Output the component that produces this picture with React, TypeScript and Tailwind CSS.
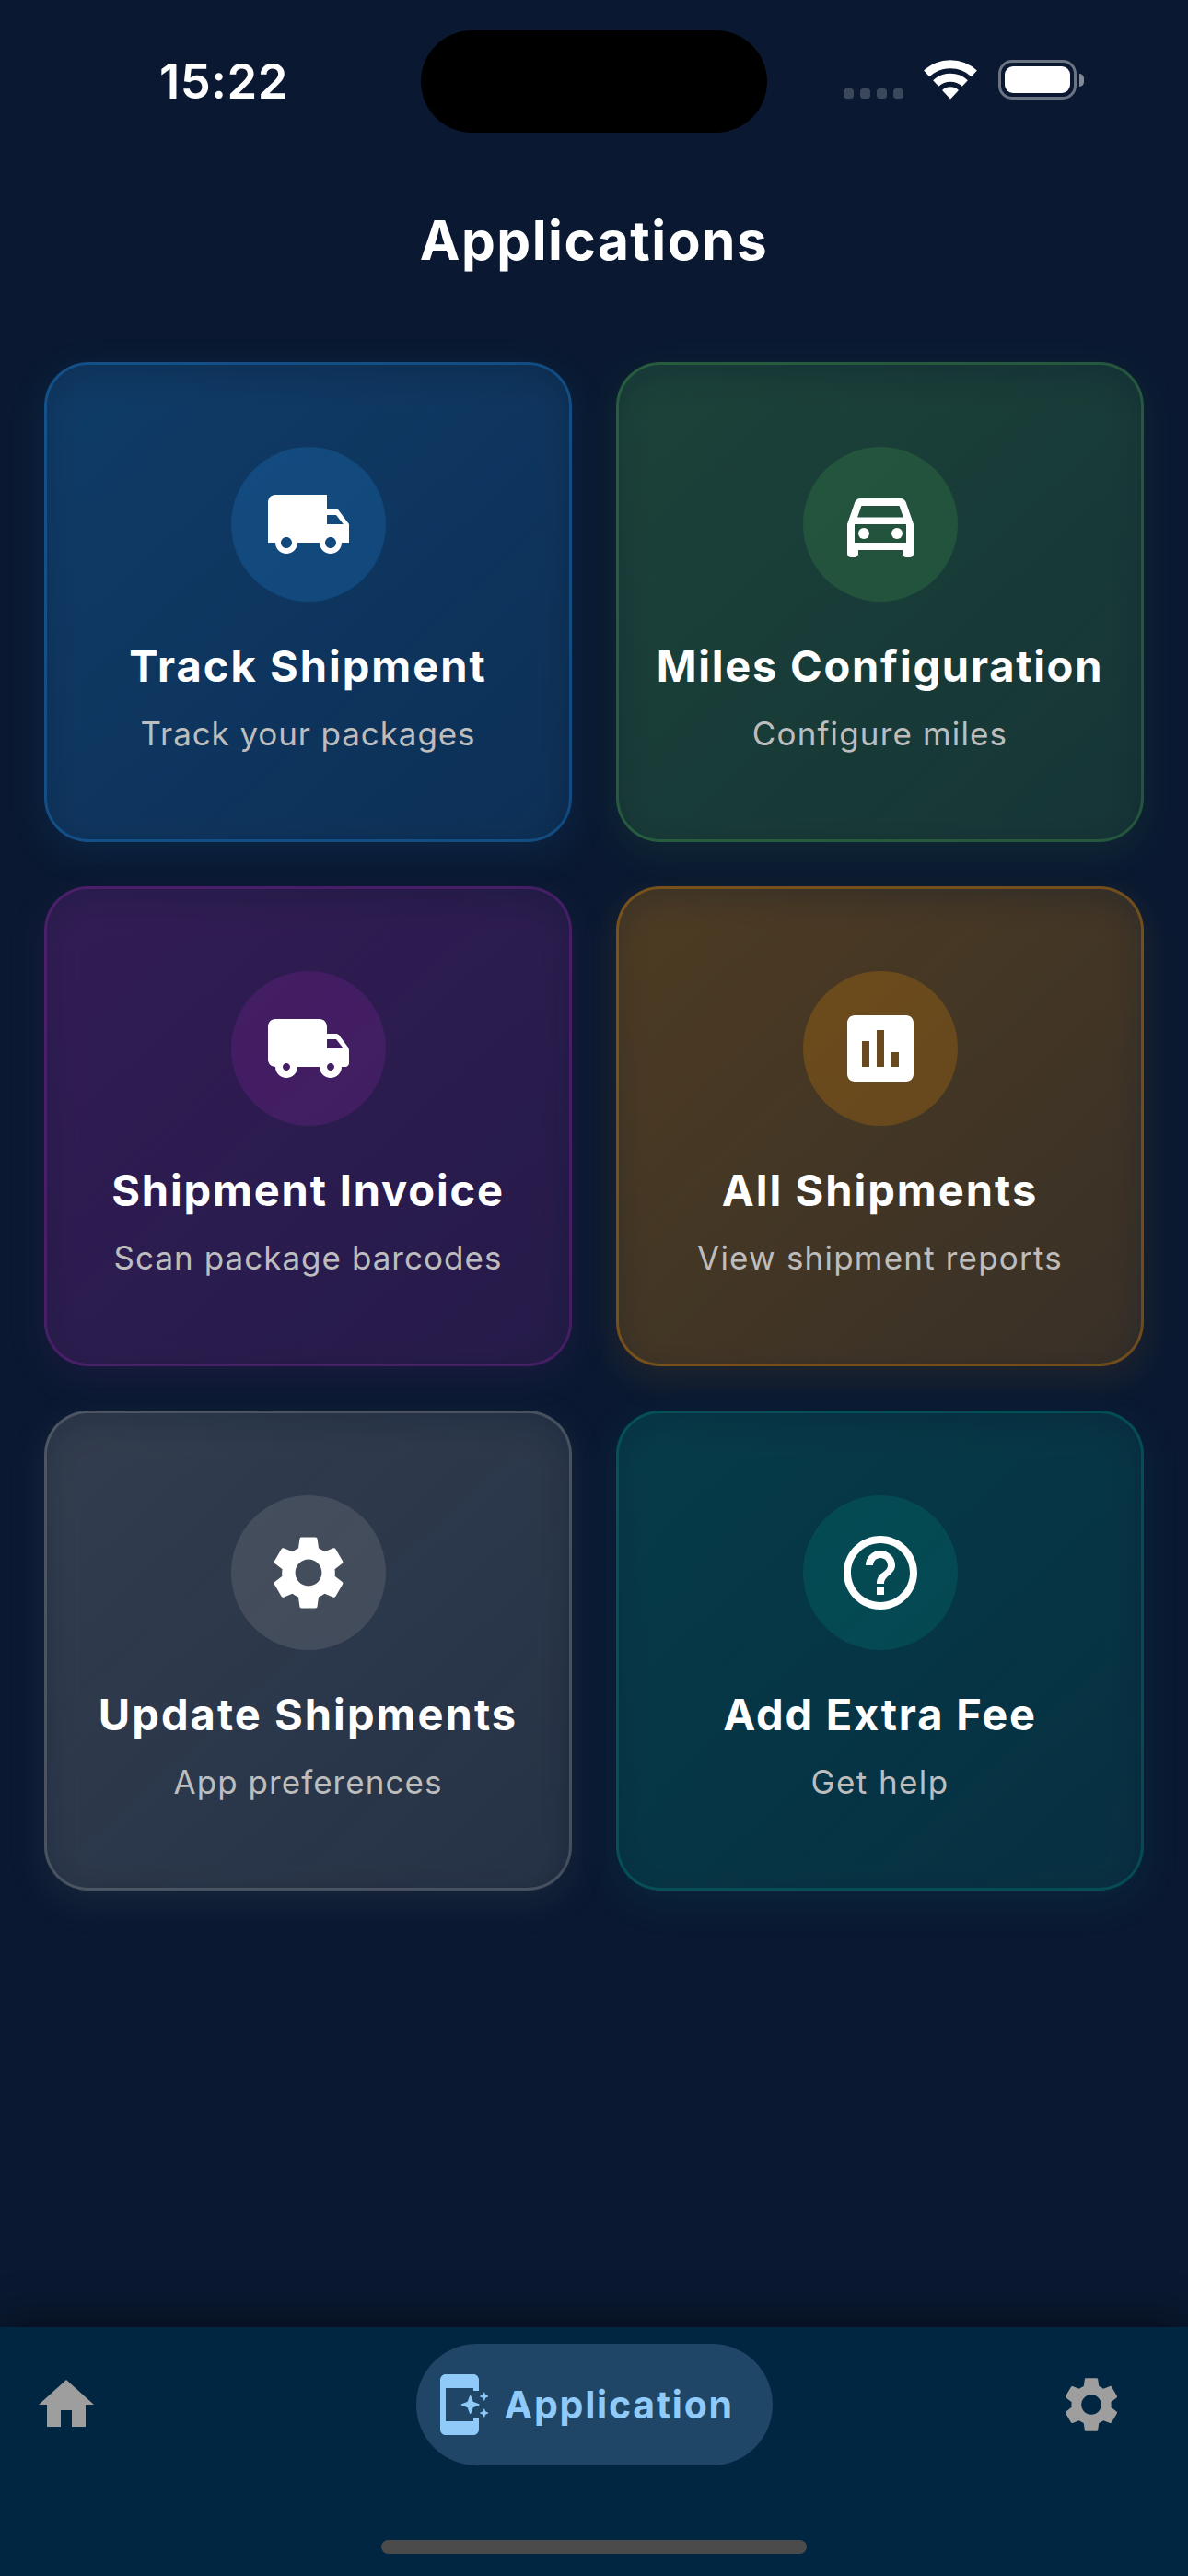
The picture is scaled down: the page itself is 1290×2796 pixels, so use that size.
import type { ReactNode } from "react";
import {
  MdAssessment,
  MdHelpOutline,
  MdHome,
  MdLocalShipping,
  MdOutlineDirectionsCar,
  MdSettings,
} from "react-icons/md";

function RoundedTruck({ className }: { className?: string }) {
  return (
    <svg viewBox="0 0 24 24" fill="currentColor" className={className}>
      <path d="M19.5 8H17V6c0-1.1-.9-2-2-2H3c-1.1 0-2 .9-2 2v9c0 1.1.9 2 2 2 0 1.66 1.34 3 3 3s3-1.34 3-3h6c0 1.66 1.34 3 3 3s3-1.34 3-3h1c.55 0 1-.45 1-1v-3.33c0-.43-.14-.85-.4-1.2L20.3 8.4c-.19-.25-.49-.4-.8-.4zM6 18c-.55 0-1-.45-1-1s.45-1 1-1 1 .45 1 1-.45 1-1 1zm13.5-8.5l1.96 2.5H17V9.5h2.5zM18 18c-.55 0-1-.45-1-1s.45-1 1-1 1 .45 1 1-.45 1-1 1z" />
    </svg>
  );
}

function AppSparkle({ className }: { className?: string }) {
  return (
    <svg viewBox="0 0 24 24" fill="currentColor" className={className}>
      <path d="M17 18H7V6h10v1h2V3c0-1.1-.9-2-2-2H7c-1.1 0-2 .9-2 2v18c0 1.1.9 2 2 2h10c1.1 0 2-.9 2-2v-4h-2v1z" />
      <g stroke="currentColor" strokeLinejoin="round">
        <path
          strokeWidth=".5"
          d="M15.9 8.95l.85 2.2 2.2.85-2.2.85-.85 2.2-.85-2.2-2.2-.85 2.2-.85z"
        />
        <path
          strokeWidth=".3"
          d="M20.9 7.6l.42 1 1 .42-1 .42-.42 1-.42-1-1-.42 1-.42zM20.9 13.6l.42 1 1 .42-1 .42-.42 1-.42-1-1-.42 1-.42z"
        />
      </g>
    </svg>
  );
}

function Wifi() {
  return (
    <svg viewBox="0 0 58 43" className="h-[43px] w-[58px]" fill="none" stroke="#fff" strokeWidth="9">
      <path d="M3.2 14.9A37.8 37.8 0 0 1 54.8 14.9" />
      <path d="M13.2 25.5A23.2 23.2 0 0 1 44.8 25.5" />
      <path
        d="M29 41.4L21 33A12 12 0 0 1 37 33Z"
        fill="#fff"
        strokeWidth="1.4"
        strokeLinejoin="round"
      />
    </svg>
  );
}

function StatusBar() {
  return (
    <div className="grid h-[177px] grid-cols-[457px_376px_1fr] items-start">
      <div className="pl-[29px] pt-[57px] text-center text-[52.5px] font-semibold leading-[62px] tracking-[0.5px] text-white">
        15:22
      </div>
      <div className="mt-[33px] h-[111px] rounded-full bg-black" />
      <div className="flex pl-[83px] pt-[65px]">
        <div className="mt-[31px] flex gap-[7px]">
          <span className="size-[11px] rounded-[3.5px] bg-[#3b475a]" />
          <span className="size-[11px] rounded-[3.5px] bg-[#3b475a]" />
          <span className="size-[11px] rounded-[3.5px] bg-[#3b475a]" />
          <span className="size-[11px] rounded-[3.5px] bg-[#3b475a]" />
        </div>
        <div className="ml-[22px]">
          <Wifi />
        </div>
        <div className="ml-[23px] flex items-center">
          <div className="h-[43px] w-[85px] rounded-[15px] border-[3.5px] border-[#6c7483] p-[4px]">
            <div className="h-full rounded-[9px] bg-white" />
          </div>
          <div className="ml-[3px] h-[14px] w-[5px] rounded-r-full bg-[#848b98]" />
        </div>
      </div>
    </div>
  );
}

type Tile = {
  title: string;
  subtitle: string;
  titleClass: string;
  subtitleClass: string;
  icon: ReactNode;
  glow: string;
  surface: string;
  disc: string;
};

const tiles: Tile[] = [
  {
    title: "Track Shipment",
    subtitle: "Track your packages",
    titleClass: "tracking-[2px]",
    subtitleClass: "tracking-[0.9px]",
    icon: <MdLocalShipping className="size-24" />,
    glow: "bg-[#2196f3]/10",
    surface: "border-[#2196f3]/30 from-[#2196f3]/20 to-[#2196f3]/10",
    disc: "bg-[#2196f3]/20",
  },
  {
    title: "Miles Configuration",
    subtitle: "Configure miles",
    titleClass: "tracking-[1.75px]",
    subtitleClass: "tracking-[1.15px]",
    icon: <MdOutlineDirectionsCar className="size-24" />,
    glow: "bg-[#4caf50]/10",
    surface: "border-[#4caf50]/30 from-[#4caf50]/20 to-[#4caf50]/10",
    disc: "bg-[#4caf50]/20",
  },
  {
    title: "Shipment Invoice",
    subtitle: "Scan package barcodes",
    titleClass: "tracking-[1.85px]",
    subtitleClass: "tracking-[1.03px]",
    icon: <RoundedTruck className="size-24" />,
    glow: "bg-[#9c27b0]/10",
    surface: "border-[#9c27b0]/30 from-[#9c27b0]/20 to-[#9c27b0]/10",
    disc: "bg-[#9c27b0]/20",
  },
  {
    title: "All Shipments",
    subtitle: "View shipment reports",
    titleClass: "tracking-[2px]",
    subtitleClass: "tracking-[1.2px]",
    icon: <MdAssessment className="size-24" />,
    glow: "bg-[#ff9800]/10",
    surface: "border-[#ff9800]/30 from-[#ff9800]/20 to-[#ff9800]/10",
    disc: "bg-[#ff9800]/20",
  },
  {
    title: "Update Shipments",
    subtitle: "App preferences",
    titleClass: "tracking-[2.05px]",
    subtitleClass: "tracking-[1.05px]",
    icon: <MdSettings className="size-24" />,
    glow: "bg-[#9e9e9e]/10",
    surface: "border-[#9e9e9e]/30 from-[#9e9e9e]/20 to-[#9e9e9e]/10",
    disc: "bg-[#9e9e9e]/20",
  },
  {
    title: "Add Extra Fee",
    subtitle: "Get help",
    titleClass: "tracking-[1.8px]",
    subtitleClass: "tracking-[1.4px]",
    icon: <MdHelpOutline className="size-24" />,
    glow: "bg-[#009688]/10",
    surface: "border-[#009688]/30 from-[#009688]/20 to-[#009688]/10",
    disc: "bg-[#009688]/20",
  },
];

function TileCard({ tile }: { tile: Tile }) {
  return (
    <div className="relative isolate aspect-[1.1]">
      {/* Soft coloured glow that also shows through the translucent surface */}
      <div
        className={`absolute inset-0 -z-10 translate-y-[12px] rounded-[48px] blur-[19px] ${tile.glow}`}
      />
      <div
        className={`flex h-full flex-col items-center rounded-[48px] border-[3px] bg-linear-to-br/srgb bg-origin-border pt-[89px] ${tile.surface}`}
      >
        <div
          className={`flex size-[168px] shrink-0 items-center justify-center rounded-full text-white ${tile.disc}`}
        >
          {tile.icon}
        </div>
        <div
          className={`mt-[40px] whitespace-nowrap text-[47px] font-bold leading-[60px] text-white ${tile.titleClass}`}
        >
          {tile.title}
        </div>
        <div
          className={`mt-[21px] whitespace-nowrap text-[35px] leading-[44px] text-[#bdbdbd] ${tile.subtitleClass}`}
        >
          {tile.subtitle}
        </div>
      </div>
    </div>
  );
}

function BottomNav() {
  return (
    <div className="mt-auto flex h-[270px] flex-col items-center bg-[#002642] shadow-[0_-15px_37px_rgba(0,0,0,0.35)]">
      <div className="mt-[18px] grid w-full grid-cols-[1fr_387px_1fr] items-center px-[36px]">
        <MdHome className="size-[72px] text-[#9e9e9e]" />
        <div className="flex h-[132px] items-center rounded-full bg-[#1f4666] pl-[11px] text-[#90caf9]">
          <AppSparkle className="size-[72px] shrink-0" />
          <span className="ml-[13px] text-[41px] font-bold leading-[50px] tracking-[1.8px]">
            Application
          </span>
        </div>
        <MdSettings className="mr-[33px] size-[72px] justify-self-end text-[#9e9e9e]" />
      </div>
      <div className="mt-[81px] h-[15px] w-[462px] rounded-full bg-[#4b4b4b]" />
    </div>
  );
}

export default function App() {
  return (
    <div className="flex h-[2796px] w-[1290px] flex-col overflow-hidden bg-[#0a1931] font-['Inter',sans-serif]">
      <StatusBar />
      <div className="flex h-[168px] items-center justify-center text-[58.5px] font-bold leading-[72px] tracking-[1.5px] text-white">
        Applications
      </div>
      <div className="grid grid-cols-2 gap-[48px] p-[48px]">
        {tiles.map((tile) => (
          <TileCard key={tile.title} tile={tile} />
        ))}
      </div>
      <BottomNav />
    </div>
  );
}
